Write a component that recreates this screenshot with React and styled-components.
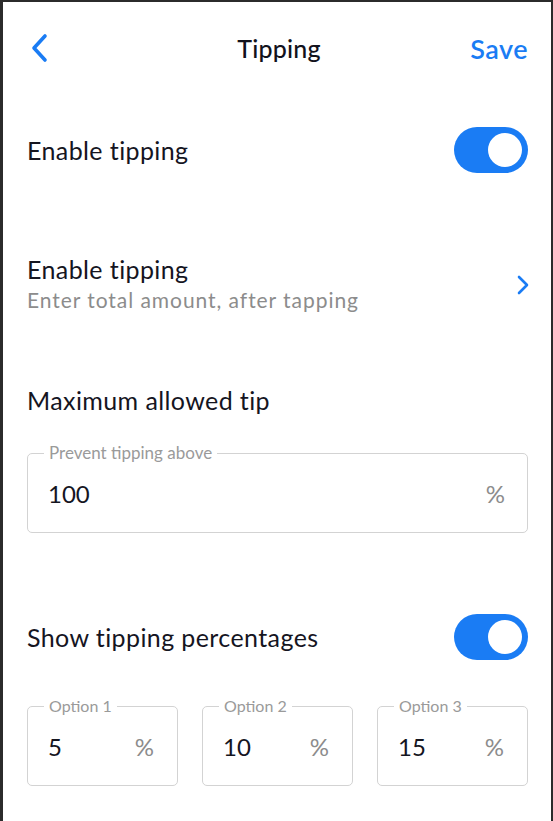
import React from "react";
import styled, { createGlobalStyle } from "styled-components";

const BLUE = "#1a7cf4";

const Global = createGlobalStyle`
  html, body {
    margin: 0;
    padding: 0;
    background: #ffffff;
  }
  body {
    font-family: "Lato", "Noto Sans", sans-serif;
    color: #15151f;
  }
`;

function Toggle() {
  return (
    <Switch>
      <Knob />
    </Switch>
  );
}

function PercentField({ label, value, small }) {
  return (
    <FieldBox small={small}>
      <FieldLabel small={small}>{label}</FieldLabel>
      <FieldValue>{value}</FieldValue>
      <Percent>%</Percent>
    </FieldBox>
  );
}

export default function App() {
  return (
    <Frame>
      <Global />
      <Header>
        <BackButton aria-label="Back">
          <svg width="18" height="30" viewBox="0 0 18 30" fill="none">
            <path d="M15 3 L4 15 L15 27" stroke={BLUE} strokeWidth="3.6" strokeLinecap="round" strokeLinejoin="round" />
          </svg>
        </BackButton>
        <Title>Tipping</Title>
        <SaveButton>Save</SaveButton>
      </Header>

      <Content>
        <ToggleRow>
          <RowTitle>Enable tipping</RowTitle>
          <Toggle />
        </ToggleRow>

        <LinkRow>
          <LinkText>
            <RowTitle>Enable tipping</RowTitle>
            <Subtitle>Enter total amount, after tapping</Subtitle>
          </LinkText>
          <svg width="14" height="20" viewBox="0 0 14 20" fill="none">
            <path d="M3 2 L11 10 L3 18" stroke={BLUE} strokeWidth="2.6" strokeLinecap="round" strokeLinejoin="round" />
          </svg>
        </LinkRow>

        <Section>
          <RowTitle>Maximum allowed tip</RowTitle>
          <PercentField label="Prevent tipping above" value="100" />
        </Section>

        <PercentSection>
          <ToggleRow>
            <RowTitle>Show tipping percentages</RowTitle>
            <Toggle />
          </ToggleRow>
          <Options>
            <PercentField small label="Option 1" value="5" />
            <PercentField small label="Option 2" value="10" />
            <PercentField small label="Option 3" value="15" />
          </Options>
        </PercentSection>
      </Content>
    </Frame>
  );
}

const Frame = styled.div`
  min-height: 821px;
  box-sizing: border-box;
  border-top: 2px solid #2b2b2b;
  border-left: 3px solid #2b2b2b;
  border-right: 2px solid #2b2b2b;
  background: #fff;
`;

const Header = styled.header`
  height: 92px;
  display: flex;
  align-items: center;
  justify-content: space-between;
  padding: 0 23px 0 27px;
`;

const BackButton = styled.button`
  border: none;
  background: none;
  padding: 0;
  width: 68px;
  display: flex;
  align-items: center;
  cursor: pointer;
`;

const Title = styled.h1`
  margin: 0;
  font-size: 25px;
  font-weight: 500;
  letter-spacing: 0.2px;
  color: #12121c;
`;

const SaveButton = styled.button`
  border: none;
  background: none;
  padding: 0;
  width: 68px;
  text-align: right;
  font-family: inherit;
  font-size: 27px;
  font-weight: 600;
  letter-spacing: 0.5px;
  color: ${BLUE};
  cursor: pointer;
`;

const Content = styled.main`
  padding: 33px 23px 0 24px;
  display: flex;
  flex-direction: column;
`;

const ToggleRow = styled.div`
  display: flex;
  align-items: center;
  justify-content: space-between;
  height: 46px;
`;

const RowTitle = styled.div`
  font-size: 25px;
  line-height: 30px;
  letter-spacing: 0.4px;
  color: #15151f;
`;

const Switch = styled.div`
  width: 74px;
  height: 46px;
  border-radius: 23px;
  background: ${BLUE};
  box-sizing: border-box;
  padding: 6px;
  display: flex;
  justify-content: flex-end;
`;

const Knob = styled.div`
  width: 34px;
  height: 34px;
  border-radius: 50%;
  background: #fff;
`;

const LinkRow = styled.div`
  margin-top: 81px;
  display: flex;
  align-items: center;
  justify-content: space-between;
  margin-right: -2px;
`;

const LinkText = styled.div`
  display: flex;
  flex-direction: column;
`;

const Subtitle = styled.div`
  font-size: 21px;
  line-height: 31px;
  letter-spacing: 0.95px;
  color: #8c8c8c;
`;

const Section = styled.section`
  margin-top: 70px;
  display: flex;
  flex-direction: column;
  gap: 38px;
`;

const PercentSection = styled.section`
  margin-top: 81px;
  display: flex;
  flex-direction: column;
  gap: 46px;
`;

const Options = styled.div`
  display: grid;
  grid-template-columns: repeat(3, 1fr);
  gap: 24px;
`;

const FieldBox = styled.div`
  position: relative;
  height: 80px;
  box-sizing: border-box;
  border: 1.5px solid #d3d3d3;
  border-radius: 5px;
  display: flex;
  align-items: center;
  justify-content: space-between;
  padding: 0 ${(p) => (p.small ? "23px" : "22px")} 0 20px;
`;

const FieldLabel = styled.span`
  position: absolute;
  top: -11px;
  left: 16px;
  padding: 0 5px;
  background: #fff;
  font-size: ${(p) => (p.small ? "16px" : "17px")};
  line-height: 20px;
  color: #9a9a9a;
`;

const FieldValue = styled.span`
  font-size: 24px;
  color: #15151f;
`;

const Percent = styled.span`
  font-size: 24px;
  color: #8c8c8c;
`;
